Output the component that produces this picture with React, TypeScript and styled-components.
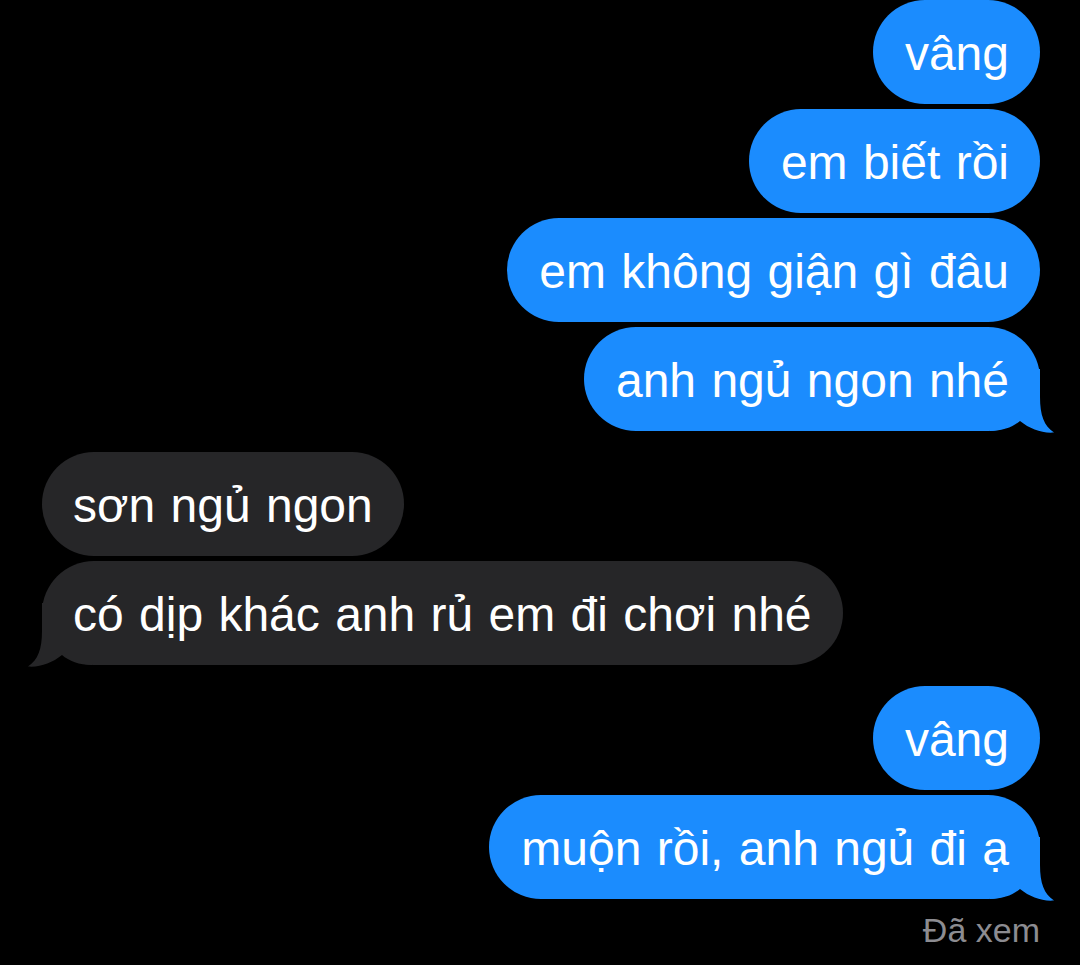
import React from "react";
import styled, { createGlobalStyle, css } from "styled-components";

const GlobalStyle = createGlobalStyle`
  html, body {
    margin: 0;
    padding: 0;
    background: #000;
  }
  body {
    font-family: "Liberation Sans", Arial, sans-serif;
  }
`;

type Side = "out" | "in";

const BLUE = "#1b8cfe";
const GRAY = "#262628";

const Thread = styled.div`
  width: 1080px;
  height: 965px;
  box-sizing: border-box;
  background: #000;
  padding: 0 40px 0 42px;
  display: flex;
  flex-direction: column;
  gap: 21px;
  overflow: hidden;
`;

const Group = styled.div<{ $side: Side }>`
  display: flex;
  flex-direction: column;
  gap: 5px;
  align-items: ${(p) => (p.$side === "out" ? "flex-end" : "flex-start")};
`;

const Bubble = styled.div<{ $side: Side }>`
  position: relative;
  height: 104px;
  box-sizing: border-box;
  padding: ${(p) => (p.$side === "out" ? "0 31px 0 32px" : "0 31px")};
  border-radius: 52px;
  display: flex;
  align-items: center;
  font-size: 48px;
  word-spacing: 2px;
  color: #fff;
  white-space: nowrap;
  background: ${(p) => (p.$side === "out" ? BLUE : GRAY)};
`;

const Text = styled.span`
  position: relative;
  z-index: 1;
  top: 1px;
`;

const TailSvg = styled.svg<{ $side: Side }>`
  position: absolute;
  bottom: -2px;
  width: 64px;
  height: 64px;
  ${(p) =>
    p.$side === "out"
      ? css`
          right: -14px;
        `
      : css`
          left: -14px;
          transform: scaleX(-1);
        `}
`;

const Seen = styled.div`
  align-self: flex-end;
  margin-top: -10px;
  font-size: 34px;
  line-height: 40px;
  color: #8c8c91;
`;

const Tail: React.FC<{ side: Side }> = ({ side }) => (
  <TailSvg $side={side} viewBox="0 0 64 64" aria-hidden>
    <path
      d="M50 0 L50 28 C50 46 54 57 64 63.5 C52 64.5 40 60 30 52 C23 58 13 62 0 62 L0 0 Z"
      fill={side === "out" ? BLUE : GRAY}
    />
  </TailSvg>
);

type Msg = { text: string; tail?: boolean };

const groups: { side: Side; msgs: Msg[] }[] = [
  {
    side: "out",
    msgs: [
      { text: "vâng" },
      { text: "em biết rồi" },
      { text: "em không giận gì đâu" },
      { text: "anh ngủ ngon nhé", tail: true },
    ],
  },
  {
    side: "in",
    msgs: [
      { text: "sơn ngủ ngon" },
      { text: "có dịp khác anh rủ em đi chơi nhé", tail: true },
    ],
  },
  {
    side: "out",
    msgs: [
      { text: "vâng" },
      { text: "muộn rồi, anh ngủ đi ạ", tail: true },
    ],
  },
];

export default function App() {
  return (
    <>
      <GlobalStyle />
      <Thread>
        {groups.map((g, gi) => (
          <Group key={gi} $side={g.side}>
            {g.msgs.map((m, mi) => (
              <Bubble key={mi} $side={g.side}>
                {m.tail && <Tail side={g.side} />}
                <Text>{m.text}</Text>
              </Bubble>
            ))}
          </Group>
        ))}
        <Seen>Đã xem</Seen>
      </Thread>
    </>
  );
}
